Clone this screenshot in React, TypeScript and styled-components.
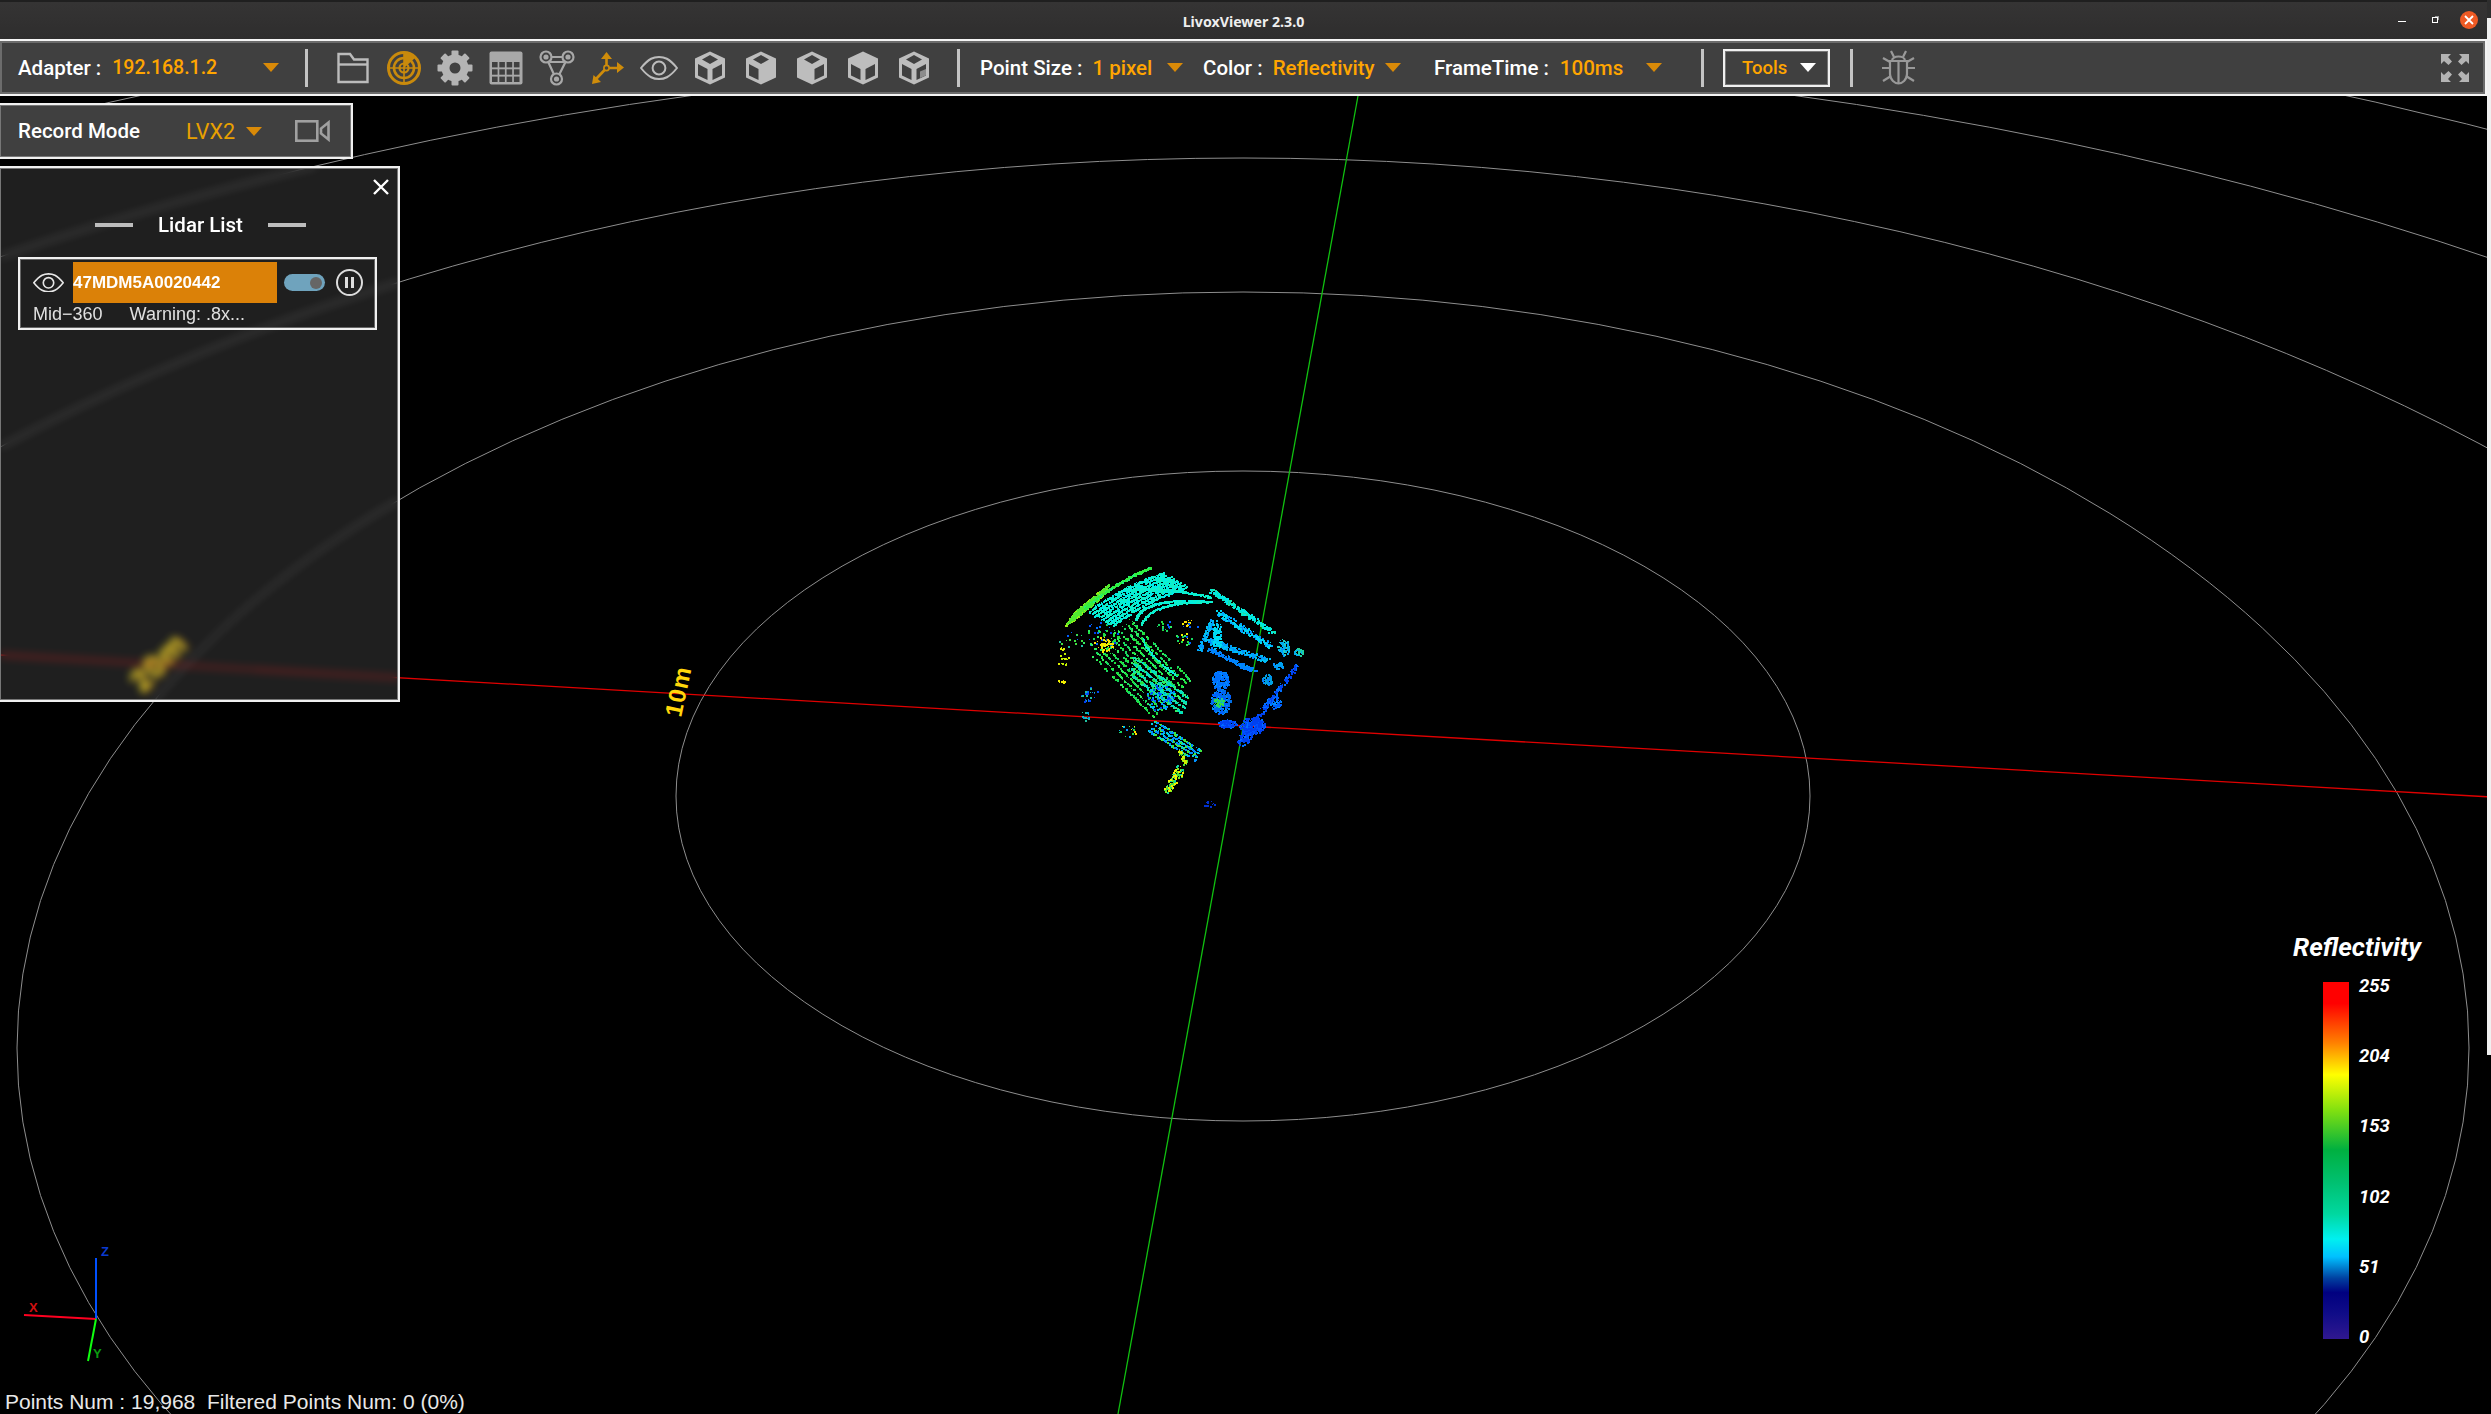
import React, { useMemo } from "react";
import styled, { createGlobalStyle } from "styled-components";

const ORANGE = "#ffa500";
const CARET = "#d98a08";
const ICON = "#bcbcbc";
const BAR = "#404040";

const GlobalStyle = createGlobalStyle`
  html, body {
    margin: 0;
    background: #000;
    overflow: hidden;
  }
  * {
    box-sizing: border-box;
  }
`;

// ---- point cloud, coordinates taken from a 3x crop starting at (1020,540)
type Band = {
  from: number[];
  ctrl?: number[];
  to: number[];
  n: number;
  w?: number;
  rep?: number;
  off?: number[];
  colors: string[];
};
type Blob = { at: number[]; r: number[]; n: number; colors: string[] };

const DENSITY = 3.4;

const CYAN = ["#00f0e0", "#00e8f0", "#10f0c8"];
const GREEN = ["#20e040", "#30f060", "#18d860"];
const LIME = ["#80f020", "#a0f010", "#50e830"];
const SKY = ["#00a0ff", "#00c0f0", "#0090ff"];
const BLUE = ["#0050ff", "#0040f0", "#0070ff"];
const YELLOW = ["#f0f000", "#ffe000"];

const bands: Band[] = [
  { from: [135, 255], to: [240, 170], n: 40, w: 4, rep: 5, off: [6, -9], colors: LIME },
  { from: [190, 205], ctrl: [290, 120], to: [392, 82], n: 70, w: 5, colors: ["#30f040", "#20f080"] },
  { from: [205, 215], ctrl: [310, 135], to: [430, 98], n: 50, w: 5, rep: 8, off: [10, 6], colors: CYAN },
  { from: [345, 240], ctrl: [362, 170], to: [560, 182], n: 70, w: 4, colors: CYAN },
  { from: [362, 252], ctrl: [392, 180], to: [575, 184], n: 60, w: 3, colors: CYAN },
  { from: [320, 150], ctrl: [420, 135], to: [570, 170], n: 60, w: 4, colors: CYAN },
  { from: [365, 292], ctrl: [385, 350], to: [470, 405], n: 36, w: 3, colors: CYAN },
  { from: [215, 345], to: [400, 530], n: 18, w: 4, rep: 11, off: [11, -11], colors: GREEN },
  { from: [340, 350], to: [500, 470], n: 36, w: 6, rep: 4, off: [-5, 16], colors: ["#20e0a0", "#30f060", "#00e0c0"] },
  { from: [400, 540], to: [540, 630], n: 22, w: 5, rep: 4, off: [-5, 10], colors: ["#40e840", "#00d0e0", "#0090ff"] },
  { from: [478, 630], to: [495, 670], n: 10, w: 10, colors: ["#d0f000", "#40e040"] },
  { from: [482, 682], to: [440, 750], n: 30, w: 24, colors: ["#40e040", "#80f020", "#f0f000", "#10d8a0"] },
  { from: [572, 150], to: [758, 275], n: 70, w: 14, colors: ["#20e0a0", "#00e8d0", "#00e8e8"] },
  { from: [590, 215], to: [752, 318], n: 60, w: 16, colors: ["#00d8f0", "#00a8ff", "#0090ff"] },
  { from: [565, 300], to: [740, 360], n: 60, w: 16, colors: SKY },
  { from: [565, 325], to: [705, 395], n: 45, w: 12, colors: ["#0080ff", "#0090f0"] },
  { from: [575, 240], to: [535, 330], n: 28, w: 14, colors: SKY },
  { from: [590, 250], to: [590, 320], n: 32, w: 24, colors: ["#00e0f0", "#00c8f8"] },
  { from: [700, 545], to: [830, 375], n: 50, w: 12, colors: BLUE },
  { from: [660, 605], to: [700, 560], n: 36, w: 26, colors: BLUE },
];

const blobs: Blob[] = [
  { at: [250, 312], r: [28, 22], n: 12, colors: YELLOW },
  { at: [240, 290], r: [60, 45], n: 15, colors: [...BLUE, ...GREEN] },
  { at: [125, 350], r: [18, 30], n: 5, colors: ["#c0f000", "#e0f000"] },
  { at: [150, 300], r: [45, 25], n: 5, colors: ["#20c0a0", "#40e040", "#0060ff"] },
  { at: [120, 423], r: [15, 3], n: 2, colors: YELLOW },
  { at: [210, 465], r: [30, 25], n: 9, colors: [...BLUE, "#20c0a0"] },
  { at: [195, 525], r: [12, 15], n: 4, colors: ["#00a0e0", "#20c0a0"] },
  { at: [420, 470], r: [42, 40], n: 26, colors: [...SKY, ...BLUE] },
  { at: [430, 255], r: [22, 18], n: 5, colors: [...GREEN, "#0060ff"] },
  { at: [490, 295], r: [28, 18], n: 6, colors: [...GREEN, ...YELLOW, "#0060ff"] },
  { at: [510, 250], r: [30, 12], n: 4, colors: [...YELLOW, "#0060ff"] },
  { at: [325, 570], r: [28, 20], n: 5, colors: [...GREEN, ...YELLOW, ...SKY] },
  { at: [600, 420], r: [26, 30], n: 60, colors: ["#0090ff", "#0070ff"] },
  { at: [600, 482], r: [30, 38], n: 75, colors: ["#0060ff", "#0090ff", "#0070e8"] },
  { at: [595, 485], r: [16, 14], n: 12, colors: ["#20d080", "#30e040"] },
  { at: [620, 550], r: [28, 12], n: 34, colors: BLUE },
  { at: [695, 555], r: [38, 24], n: 75, colors: BLUE },
  { at: [760, 485], r: [22, 18], n: 20, colors: ["#0090ff", "#0060ff"] },
  { at: [790, 320], r: [18, 24], n: 24, colors: ["#00b0f0", "#0090ff", "#20d0c0"] },
  { at: [740, 418], r: [14, 16], n: 18, colors: ["#00a0e0", "#0080ff"] },
  { at: [835, 335], r: [16, 12], n: 7, colors: ["#00b0f0", "#20d0a0"] },
  { at: [772, 375], r: [18, 10], n: 12, colors: ["#00a0f0", "#0090ff"] },
  { at: [565, 790], r: [20, 8], n: 4, colors: ["#0030d0"] },
];

function buildCloud() {
  let seed = 4217;
  const rand = () => {
    seed = (seed * 16807) % 2147483647;
    return seed / 2147483647;
  };
  const paths: Record<string, string> = {};
  const dot = (zx: number, zy: number, colors: string[]) => {
    const x = Math.round(1020 + zx / 3);
    const y = Math.round(540 + zy / 3);
    const c = colors[Math.floor(rand() * colors.length)];
    const s = rand() > 0.3 ? 2 : 1;
    paths[c] = (paths[c] || "") + `M${x} ${y}h${s}v${s}h-${s}z`;
  };
  bands.forEach((b) => {
    for (let k = 0; k < (b.rep || 1); k++) {
      const ox = (b.off ? b.off[0] : 0) * k;
      const oy = (b.off ? b.off[1] : 0) * k;
      for (let i = 0; i < b.n * DENSITY; i++) {
        const t = rand();
        const c = b.ctrl || [(b.from[0] + b.to[0]) / 2, (b.from[1] + b.to[1]) / 2];
        const x = (1 - t) * (1 - t) * b.from[0] + 2 * t * (1 - t) * c[0] + t * t * b.to[0];
        const y = (1 - t) * (1 - t) * b.from[1] + 2 * t * (1 - t) * c[1] + t * t * b.to[1];
        const w = b.w || 1;
        dot(x + ox + (rand() - 0.5) * w, y + oy + (rand() - 0.5) * w, b.colors);
      }
    }
  });
  blobs.forEach((b) => {
    for (let i = 0; i < b.n * DENSITY; i++) {
      const a = rand() * Math.PI * 2;
      const d = Math.sqrt(rand());
      dot(b.at[0] + Math.cos(a) * d * b.r[0], b.at[1] + Math.sin(a) * d * b.r[1], b.colors);
    }
  });
  return Object.entries(paths);
}

function Scene() {
  const cloud = useMemo(buildCloud, []);
  return (
    <SceneSvg viewBox="0 0 2487 1414">
      <g fill="none" stroke="#8e8e8e" strokeWidth="1">
        <ellipse cx="1243" cy="796" rx="567" ry="325" />
        <ellipse cx="1243" cy="1048" rx="1226" ry="756" />
        <ellipse cx="1243" cy="1418" rx="1950" ry="1260" />
        <ellipse cx="1243" cy="1971" rx="2800" ry="1913" />
        <ellipse cx="1243" cy="2925" rx="3900" ry="2950" />
      </g>
      <line x1="0" y1="655" x2="2491" y2="797" stroke="#e00000" strokeWidth="1.3" />
      <line x1="1358" y1="96" x2="1118" y2="1414" stroke="#10c010" strokeWidth="1.3" />
      <RingLabel transform="translate(681 718) rotate(-78)">10m</RingLabel>
      <RingLabel $size={32} transform="translate(143 694) rotate(-46)">20m</RingLabel>
      <g shapeRendering="crispEdges">
        {cloud.map(([c, d]) => (
          <path key={c} d={d} fill={c} />
        ))}
      </g>
      <g strokeWidth="2">
        <line x1="96" y1="1258" x2="96" y2="1319" stroke="#0050ff" />
        <line x1="24" y1="1315" x2="96" y2="1319" stroke="#ff0020" />
        <line x1="96" y1="1319" x2="88" y2="1361" stroke="#10ff10" />
      </g>
      <GizmoLabel x="101" y="1256" fill="#0a3ad0">Z</GizmoLabel>
      <GizmoLabel x="29" y="1312" fill="#d01010">X</GizmoLabel>
      <GizmoLabel x="93" y="1358" fill="#0a9a10">Y</GizmoLabel>
    </SceneSvg>
  );
}

// ---- toolbar icons
function FolderIcon() {
  return (
    <svg width="32" height="32" viewBox="0 0 32 32" fill="none" stroke={ICON} strokeWidth="2.4">
      <path d="M1.5 2 H13 L17 7.5 H30.5 V30 H1.5 Z" />
      <path d="M1.5 12.5 H30.5" />
    </svg>
  );
}

function RadarIcon() {
  const c = "#c98a0c";
  return (
    <svg width="36" height="36" viewBox="0 0 36 36" fill="none" stroke={c}>
      <circle cx="18" cy="18" r="15.5" strokeWidth="3" />
      <circle cx="18" cy="18" r="10" strokeWidth="2.6" />
      <circle cx="18" cy="18" r="4.5" strokeWidth="2.2" />
      <path d="M18 2 V34 M2 18 H34" strokeWidth="1.6" />
      <path d="M18 18 V3 A15 15 0 0 1 29 8 Z" fill={c} stroke="none" />
    </svg>
  );
}

function GearIcon() {
  return (
    <svg width="36" height="36" viewBox="0 0 36 36">
      <circle cx="18" cy="18" r="9.5" fill="none" stroke="#b4b4b4" strokeWidth="8" />
      {[0, 45, 90, 135, 180, 225, 270, 315].map((a) => (
        <rect key={a} x="14.5" y="0.5" width="7" height="7" rx="1" fill="#b4b4b4" transform={`rotate(${a} 18 18)`} />
      ))}
    </svg>
  );
}

function GridIcon() {
  const cells = [];
  for (let r = 0; r < 3; r++) {
    for (let c = 0; c < 4; c++) {
      cells.push(<rect key={`${r}${c}`} x={3 + c * 7.3} y={11 + r * 7.3} width="5.6" height="5.4" fill={BAR} />);
    }
  }
  return (
    <svg width="34" height="34" viewBox="0 0 34 34">
      <rect x="0.5" y="0.5" width="33" height="33" rx="2" fill="#a8a8a8" />
      {cells}
    </svg>
  );
}

function NodesIcon() {
  return (
    <svg width="36" height="36" viewBox="0 0 36 36" fill="none" stroke="#a8a8a8" strokeWidth="2.2">
      <path d="M7 7 H29 L17.5 30 Z M11 12 H25" />
      <g fill={BAR}>
        <circle cx="7" cy="7" r="5.5" />
        <circle cx="29" cy="7" r="5.5" />
        <circle cx="17.5" cy="29" r="5.5" />
      </g>
      <g fill="#a8a8a8" stroke="none">
        <circle cx="7" cy="7" r="2.6" />
        <circle cx="29" cy="7" r="2.6" />
        <circle cx="17.5" cy="29" r="2.6" />
      </g>
    </svg>
  );
}

function AxisIcon() {
  const c = "#cf8c0a";
  return (
    <svg width="34" height="34" viewBox="0 0 34 34" fill={c} stroke={c}>
      <path d="M15.5 17 V6 M15.5 17 L28 17 M15.5 17 L5 28" strokeWidth="2.6" fill="none" />
      <path d="M15.5 1 L21 8 H10 Z M33 16.5 L26 22 V11 Z M1 33 L2.5 24 L10 31 Z" stroke="none" />
      <circle cx="15.5" cy="17" r="2.6" fill={BAR} strokeWidth="1.6" />
    </svg>
  );
}

function EyeIcon({ w = 38, color = ICON }: { w?: number; color?: string }) {
  return (
    <svg width={w} height={(w * 24) / 38} viewBox="0 0 38 24" fill="none" stroke={color} strokeWidth="2">
      <path d="M1 12 C9 2 14 1 19 1 C24 1 29 2 37 12 C29 22 24 23 19 23 C14 23 9 22 1 12 Z" />
      <circle cx="19" cy="12" r="6.4" />
    </svg>
  );
}

function CubeIcon({ solid }: { solid?: "left" | "right" | "top" | "partial" }) {
  return (
    <svg width="32" height="34" viewBox="0 0 32 34">
      <path d="M16 0.5 L31 7.5 V26.5 L16 33.5 L1 26.5 V7.5 Z" fill="#bdbdbd" />
      {solid !== "top" && <path d="M16 4 L24 8.5 L16 13 L8 8.5 Z" fill={BAR} />}
      {solid !== "left" && <path d="M4 13 L13.5 18 V29 L4 24.5 Z" fill={BAR} />}
      {solid !== "right" && <path d="M28 13 L18.5 18 V29 L28 24.5 Z" fill={BAR} />}
      {solid === "partial" && <path d="M28 18 L22 20.5 V27 L28 24.5 Z" fill="#8c8c8c" />}
    </svg>
  );
}

function BugIcon() {
  return (
    <svg width="35" height="35" viewBox="0 0 35 35" fill="none" stroke="#999" strokeWidth="2.2">
      <path d="M10 1 L13 7 M25 1 L22 7" />
      <path d="M11 11 C11 5 24 5 24 11 Z" />
      <path d="M9 11 H26 V24 C26 30 21 33.5 17.5 33.5 C14 33.5 9 30 9 24 Z" />
      <path d="M17.5 11 V33 M9 18 H1 M26 18 H34 M9 12 L2 8 M26 12 L33 8 M10 26 L2 31 M25 26 L33 31" />
    </svg>
  );
}

function FullscreenIcon() {
  const arrow = "M0 0 H10 L7 3 L11 7.5 L7.5 11 L3 7 L0 10 Z";
  return (
    <svg width="28" height="28" viewBox="0 0 28 28" fill="#b4b4b4">
      <path d={arrow} />
      <path d={arrow} transform="translate(28 0) scale(-1 1)" />
      <path d={arrow} transform="translate(0 28) scale(1 -1)" />
      <path d={arrow} transform="translate(28 28) scale(-1 -1)" />
    </svg>
  );
}

function CameraIcon() {
  return (
    <svg width="35" height="22" viewBox="0 0 35 22" fill="none" stroke="#a0a0a0" strokeWidth="2.6">
      <rect x="1.3" y="1.3" width="21" height="19.4" />
      <path d="M33.5 2.5 L26 8.5 V13.5 L33.5 19.5 Z" />
    </svg>
  );
}

const legendValues = ["255", "204", "153", "102", "51", "0"];

export default function App() {
  return (
    <>
      <GlobalStyle />
      <Desktop>
        <AppWindow>
          <Scene />
          <TitleBar>
            <Title>LivoxViewer 2.3.0</Title>
            <WindowButtons>
              <MinimizeButton />
              <RestoreButton />
              <CloseButton>
                <svg width="10" height="10" viewBox="0 0 10 10" stroke="#fff" strokeWidth="1.8">
                  <path d="M1 1 L9 9 M9 1 L1 9" />
                </svg>
              </CloseButton>
            </WindowButtons>
          </TitleBar>

          <Toolbar>
            <Group $w={261}>
              <Label>Adapter :</Label>
              <Value $ml={11} $size={19.5}>192.168.1.2</Value>
              <Caret />
            </Group>
            <Separator $ml={26} />
            <IconRow>
              <IconButton><FolderIcon /></IconButton>
              <IconButton><RadarIcon /></IconButton>
              <IconButton><GearIcon /></IconButton>
              <IconButton><GridIcon /></IconButton>
              <IconButton><NodesIcon /></IconButton>
              <IconButton><AxisIcon /></IconButton>
              <IconButton><EyeIcon /></IconButton>
              <IconButton><CubeIcon /></IconButton>
              <IconButton><CubeIcon solid="right" /></IconButton>
              <IconButton><CubeIcon solid="left" /></IconButton>
              <IconButton><CubeIcon solid="top" /></IconButton>
              <IconButton><CubeIcon solid="partial" /></IconButton>
            </IconRow>
            <Separator $ml={18} />
            <Group $w={203} $ml={20}>
              <Label>Point Size :</Label>
              <Value $ml={10}>1 pixel</Value>
              <Caret />
            </Group>
            <Group $w={198} $ml={20}>
              <Label>Color :</Label>
              <Value $ml={10}>Reflectivity</Value>
              <Caret />
            </Group>
            <Group $w={228} $ml={33}>
              <Label>FrameTime :</Label>
              <Value $ml={11}>100ms</Value>
              <Caret />
            </Group>
            <Separator $ml={39} />
            <ToolsButton>
              <ToolsText>Tools</ToolsText>
              <Caret $color="#fff" />
            </ToolsButton>
            <Separator $ml={20} />
            <BugSlot><BugIcon /></BugSlot>
            <FullscreenSlot><FullscreenIcon /></FullscreenSlot>
          </Toolbar>

          <Viewport>
            <RecordBar>
              <Label>Record Mode</Label>
              <RecordValue>LVX2</RecordValue>
              <Caret $ml={11} />
              <CameraSlot><CameraIcon /></CameraSlot>
            </RecordBar>

            <LidarPanel>
              <PanelClose>
                <svg width="16" height="16" viewBox="0 0 16 16" stroke="#fff" strokeWidth="2.4">
                  <path d="M1 1 L15 15 M15 1 L1 15" />
                </svg>
              </PanelClose>
              <PanelHeader>
                <Dash />
                <PanelTitle>Lidar List</PanelTitle>
                <Dash />
              </PanelHeader>
              <LidarRow>
                <LidarTop>
                  <EyeSlot><EyeIcon w={31} color="#e6e6e6" /></EyeSlot>
                  <LidarName>47MDM5A0020442</LidarName>
                  <Toggle><ToggleKnob /></Toggle>
                  <PauseButton>
                    <PauseBar />
                    <PauseBar />
                  </PauseButton>
                </LidarTop>
                <LidarInfo>
                  <span>Mid−360</span>
                  <span>Warning: .8x...</span>
                </LidarInfo>
              </LidarRow>
            </LidarPanel>

            <StatusLine>Points Num : 19,968&nbsp; Filtered Points Num: 0 (0%)</StatusLine>

            <Legend>
              <LegendTitle>Reflectivity</LegendTitle>
              <LegendBody>
                <ColorBar />
                <LegendScale>
                  {legendValues.map((v) => (
                    <LegendValue key={v}>{v}</LegendValue>
                  ))}
                </LegendScale>
              </LegendBody>
            </Legend>
          </Viewport>
        </AppWindow>
        <DesktopEdge />
      </Desktop>
    </>
  );
}

const Desktop = styled.div`
  display: flex;
  width: 2491px;
  height: 1414px;
  background: #000;
  overflow: hidden;
`;

const AppWindow = styled.div`
  position: relative;
  display: flex;
  flex-direction: column;
  width: 2487px;
  height: 1414px;
  font-family: Roboto, "Liberation Sans", sans-serif;
  color: #fff;
`;

const DesktopEdge = styled.div`
  flex: none;
  width: 4px;
  height: 1055px;
  background: linear-gradient(#2e2e2e 18px, #f0f0f0 18px);
`;

const SceneSvg = styled.svg`
  position: absolute;
  inset: 0;
  width: 2487px;
  height: 1414px;
  background: #000;
`;

const RingLabel = styled.text<{ $size?: number }>`
  font-family: "Liberation Sans", sans-serif;
  font-weight: 700;
  font-size: ${(p) => p.$size || 24}px;
  letter-spacing: 1px;
  fill: #ffd60a;
`;

const GizmoLabel = styled.text`
  font-family: "Liberation Sans", sans-serif;
  font-weight: 700;
  font-size: 13px;
`;

const TitleBar = styled.header`
  position: relative;
  display: flex;
  align-items: center;
  justify-content: center;
  flex: none;
  height: 39px;
  padding-top: 3px;
  background: linear-gradient(#1f1f1f 2px, #353434 2px, #2e2d2d 100%);
`;

const Title = styled.div`
  font-family: "Noto Sans", sans-serif;
  font-size: 14.2px;
  font-weight: 700;
  color: #eee;
`;

const WindowButtons = styled.div`
  position: absolute;
  top: 11px;
  right: 9px;
  display: flex;
  align-items: center;
`;

const MinimizeButton = styled.div`
  width: 8px;
  height: 1px;
  margin-top: 2px;
  background: #fff;
`;

const RestoreButton = styled.div`
  position: relative;
  width: 6px;
  height: 6px;
  margin-left: 26px;
  border: 1px solid #fff;
  box-shadow: 2px -2px 0 -1px #999;
`;

const CloseButton = styled.div`
  display: flex;
  align-items: center;
  justify-content: center;
  width: 18px;
  height: 18px;
  margin-left: 22px;
  border-radius: 50%;
  background: #ee5a24;
`;

const Toolbar = styled.nav`
  position: relative;
  display: flex;
  align-items: center;
  flex: none;
  height: 57px;
  padding-left: 18px;
  background: ${BAR};
  border: 2px solid #f4f4f4;
  border-left: 0;
  box-shadow: inset 1px 1px 0 1px #6c6c6c, inset -1px -1px 0 1px #6c6c6c;
`;

const Group = styled.div<{ $w: number; $ml?: number }>`
  display: flex;
  align-items: center;
  flex: none;
  width: ${(p) => p.$w}px;
  margin-left: ${(p) => p.$ml || 0}px;
`;

const Label = styled.span`
  font-size: 20.5px;
  font-weight: 500;
  white-space: nowrap;
`;

const Value = styled.span<{ $ml?: number; $size?: number }>`
  margin-left: ${(p) => p.$ml || 0}px;
  font-size: ${(p) => p.$size || 20.5}px;
  font-weight: 500;
  color: ${ORANGE};
  white-space: nowrap;
`;

const Caret = styled.i<{ $color?: string; $ml?: number }>`
  flex: none;
  width: 0;
  height: 0;
  margin-left: ${(p) => (p.$ml ? `${p.$ml}px` : "auto")};
  border-top: 9px solid ${(p) => p.$color || CARET};
  border-left: 8px solid transparent;
  border-right: 8px solid transparent;
`;

const Separator = styled.div<{ $ml: number }>`
  flex: none;
  width: 3px;
  height: 38px;
  margin-left: ${(p) => p.$ml}px;
  background: #c4c4c4;
`;

const IconRow = styled.div`
  display: flex;
  margin-left: 19px;
`;

const IconButton = styled.div`
  display: flex;
  align-items: center;
  justify-content: center;
  width: 51px;
  height: 36px;
`;

const ToolsButton = styled.div`
  display: flex;
  align-items: center;
  flex: none;
  width: 107px;
  height: 38px;
  margin-left: 19px;
  padding: 0 12px 0 17px;
  border: 2px solid #f0f0f0;
  box-shadow: inset 0 0 0 1px #777;
`;

const ToolsText = styled.span`
  font-size: 18.5px;
  font-weight: 500;
  color: ${ORANGE};
`;

const BugSlot = styled.div`
  display: flex;
  margin-left: 28px;
`;

const FullscreenSlot = styled.div`
  display: flex;
  margin-left: auto;
  margin-right: 16px;
`;

const Viewport = styled.main`
  position: relative;
  display: flex;
  flex-direction: column;
  flex: 1;
  min-height: 0;
  padding-top: 7px;
`;

const RecordBar = styled.div`
  display: flex;
  align-items: center;
  flex: none;
  width: 353px;
  height: 56px;
  padding-left: 18px;
  background: ${BAR};
  border: 2px solid #f0f0f0;
  border-left: 0;
  box-shadow: inset 1px 1px 0 #777, inset -1px -1px 0 #777;
`;

const RecordValue = styled.span`
  margin-left: 46px;
  font-size: 21.5px;
  color: #e8a000;
`;

const CameraSlot = styled.div`
  display: flex;
  margin-left: 33px;
`;

const LidarPanel = styled.section`
  position: relative;
  flex: none;
  width: 400px;
  height: 536px;
  margin-top: 7px;
  padding: 45px 21px 0 18px;
  background: rgba(255, 255, 255, 0.12);
  backdrop-filter: blur(4px);
  border: 2px solid #f0f0f0;
  border-left: 0;
  box-shadow: inset 1px 1px 0 #777, inset -1px -1px 0 #777;
`;

const PanelClose = styled.div`
  position: absolute;
  top: 11px;
  right: 9px;
  display: flex;
`;

const PanelHeader = styled.div`
  display: flex;
  align-items: center;
  justify-content: center;
  gap: 25px;
  height: 24px;
  margin: 0 0 20px 6px;
`;

const Dash = styled.div`
  width: 38px;
  height: 4px;
  background: #bdbdbd;
`;

const PanelTitle = styled.h2`
  margin: 0;
  font-size: 20.5px;
  font-weight: 500;
`;

const LidarRow = styled.div`
  width: 359px;
  height: 73px;
  border: 2px solid #f0f0f0;
  box-shadow: inset 0 0 0 1px #666;
`;

const LidarTop = styled.div`
  display: flex;
  align-items: center;
  height: 41px;
  margin-top: 3px;
`;

const EyeSlot = styled.div`
  display: flex;
  flex: none;
  width: 53px;
  padding-left: 13px;
`;

const LidarName = styled.div`
  display: flex;
  align-items: center;
  flex: none;
  width: 204px;
  height: 41px;
  background: #db8108;
  font-family: "Liberation Sans", sans-serif;
  font-size: 17px;
  font-weight: 700;
`;

const Toggle = styled.div`
  position: relative;
  flex: none;
  width: 41px;
  height: 17px;
  margin-left: 7px;
  border-radius: 9px;
  background: #6fa3bd;
`;

const ToggleKnob = styled.div`
  position: absolute;
  top: 2.5px;
  right: 3px;
  width: 12px;
  height: 12px;
  border-radius: 50%;
  background: #666;
`;

const PauseButton = styled.div`
  display: flex;
  align-items: center;
  justify-content: center;
  gap: 3px;
  flex: none;
  width: 27px;
  height: 27px;
  margin-left: 11px;
  border: 2px solid #ddd;
  border-radius: 50%;
`;

const PauseBar = styled.div`
  width: 3px;
  height: 11px;
  background: #ddd;
`;

const LidarInfo = styled.div`
  display: flex;
  gap: 27px;
  padding: 1px 0 0 13px;
  font-family: "Liberation Sans", sans-serif;
  font-size: 18px;
  line-height: 20px;
  color: #e0e0e0;
`;

const StatusLine = styled.div`
  margin-top: auto;
  padding-left: 5px;
  font-family: "Liberation Sans", sans-serif;
  font-size: 21px;
  line-height: 24px;
  color: #e8e8e8;
  white-space: nowrap;
`;

const Legend = styled.aside`
  position: absolute;
  top: 832px;
  left: 2293px;
  width: 140px;
`;

const LegendTitle = styled.div`
  font-size: 26px;
  font-weight: 700;
  font-style: italic;
  line-height: 38px;
`;

const LegendBody = styled.div`
  display: flex;
  height: 357px;
  margin-top: 16px;
  padding-left: 30px;
`;

const ColorBar = styled.div`
  flex: none;
  width: 26px;
  background: linear-gradient(
    #ff0000 0%,
    #ff0000 6%,
    #ff8000 17%,
    #ffff00 26%,
    #80e010 36%,
    #00b040 47%,
    #00c070 56%,
    #00d8a0 65%,
    #00f0f0 72%,
    #00c0ff 77%,
    #0040a0 83%,
    #000080 87%,
    #100c88 93%,
    #301890 100%
  );
`;

const LegendScale = styled.div`
  display: flex;
  flex-direction: column;
  justify-content: space-between;
  flex: none;
  height: 360px;
  margin-left: 10px;
`;

const LegendValue = styled.div`
  font-size: 18.5px;
  font-weight: 700;
  font-style: italic;
  line-height: 10px;
  margin-top: -1px;
`;
